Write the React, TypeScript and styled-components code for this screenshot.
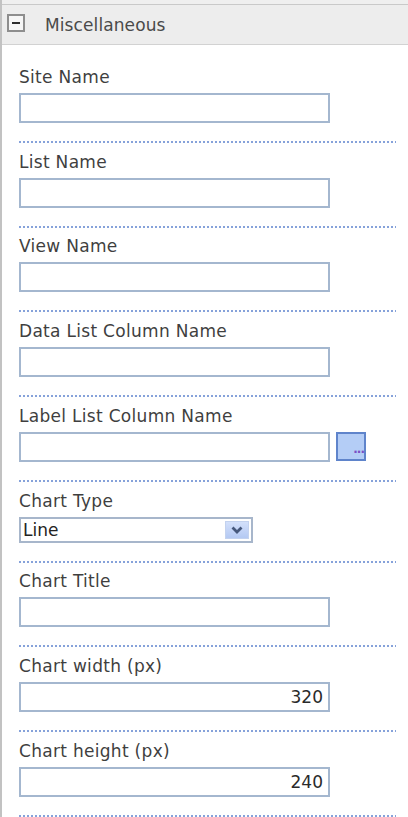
import React from "react";
import styled, { createGlobalStyle } from "styled-components";

const Global = createGlobalStyle`
  html, body { margin: 0; padding: 0; background: #ffffff; }
  body { font-family: "DejaVu Sans", Verdana, sans-serif; }
`;

const Panel = styled.div`
  width: 408px;
  min-height: 817px;
  box-sizing: border-box;
  border-left: 2px solid #c2c2c2;
  background: #ffffff;
`;

const TopCap = styled.div`
  height: 4px;
  background: #efefef;
`;

const Header = styled.div`
  height: 39px;
  background: #ededed;
  border-top: 1px solid #c9c9c9;
  border-bottom: 1px solid #d2d2d2;
  display: flex;
  align-items: center;
  padding-left: 5px;
  gap: 20px;
`;

const Toggle = styled.div`
  width: 18px;
  height: 18px;
  box-sizing: border-box;
  border: 2px solid #8e8e8e;
  background: #f6f6f6;
  display: flex;
  align-items: center;
  justify-content: center;
  margin-top: -3px;
  &::after {
    content: "";
    width: 8px;
    height: 2px;
    background: #2d2d2d;
  }
`;

const HeaderTitle = styled.span`
  font-size: 17px;
  color: #4a4a4a;
  line-height: 20px;
  letter-spacing: 0.1px;
`;

const Body = styled.div`
  padding: 13px 12px 0 17px;
`;

const Field = styled.div`
  padding-top: 8.75px;
  display: flex;
  flex-direction: column;
`;

const Label = styled.div`
  font-size: 17px;
  line-height: 20px;
  color: #3f3f3f;
  margin-bottom: 6px;
  white-space: nowrap;
  letter-spacing: 0.3px;
`;

const Row = styled.div`
  display: flex;
  align-items: center;
  gap: 6px;
`;

const TextBox = styled.div<{ $align?: "left" | "right" }>`
  width: 311px;
  height: 30px;
  box-sizing: border-box;
  border: 2px solid #a4b7cf;
  background: #ffffff;
  font-size: 17px;
  line-height: 26px;
  color: #2a2a2a;
  padding: 0 5px;
  text-align: ${(p) => p.$align ?? "left"};
`;

const PickerButton = styled.div`
  width: 30px;
  height: 29px;
  box-sizing: border-box;
  border: 2px solid #5f84cb;
  background: #b4cdf6;
  display: flex;
  align-items: flex-end;
  justify-content: flex-end;
  font-size: 12px;
  line-height: 12px;
  color: #7a4fc4;
  padding: 0 0 4px 0;
  letter-spacing: -1px;
  font-weight: bold;
`;

const SelectBox = styled.div`
  width: 234px;
  height: 26px;
  box-sizing: border-box;
  border: 2px solid #a7b6cb;
  background: #ffffff;
  display: flex;
  align-items: center;
  justify-content: space-between;
  padding: 0 2px 0 2px;
`;

const SelectText = styled.span`
  font-size: 17px;
  line-height: 20px;
  color: #232323;
`;

const SelectArrow = styled.div`
  width: 24px;
  height: 18px;
  box-sizing: border-box;
  background: linear-gradient(#d3e0fb, #b4c9f3);
  border: 1px solid #c3d2ef;
  display: flex;
  align-items: center;
  justify-content: center;
`;

const Separator = styled.div`
  margin-top: 18px;
  height: 2px;
  width: 377px;
  background-image: repeating-linear-gradient(
    to right,
    #86a2da 0,
    #86a2da 2px,
    transparent 2px,
    transparent 4px
  );
`;

type FieldDef =
  | { kind: "text"; label: string; value?: string; align?: "left" | "right" }
  | { kind: "picker"; label: string }
  | { kind: "select"; label: string; value: string };

const fields: FieldDef[] = [
  { kind: "text", label: "Site Name" },
  { kind: "text", label: "List Name" },
  { kind: "text", label: "View Name" },
  { kind: "text", label: "Data List Column Name" },
  { kind: "picker", label: "Label List Column Name" },
  { kind: "select", label: "Chart Type", value: "Line" },
  { kind: "text", label: "Chart Title" },
  { kind: "text", label: "Chart width (px)", value: "320", align: "right" },
  { kind: "text", label: "Chart height (px)", value: "240", align: "right" },
];

const Chevron = () => (
  <svg width="12" height="8" viewBox="0 0 12 8">
    <path d="M1.5 1.5 L6 6 L10.5 1.5" fill="none" stroke="#46587c" strokeWidth="2.8" />
  </svg>
);

export default function App() {
  return (
    <>
      <Global />
      <Panel>
        <TopCap />
        <Header>
          <Toggle />
          <HeaderTitle>Miscellaneous</HeaderTitle>
        </Header>
        <Body>
          {fields.map((f) => (
            <Field key={f.label}>
              <Label>{f.label}</Label>
              {f.kind === "text" && (
                <TextBox $align={f.align}>{f.value ?? ""}</TextBox>
              )}
              {f.kind === "picker" && (
                <Row>
                  <TextBox />
                  <PickerButton>...</PickerButton>
                </Row>
              )}
              {f.kind === "select" && (
                <SelectBox>
                  <SelectText>{f.value}</SelectText>
                  <SelectArrow>
                    <Chevron />
                  </SelectArrow>
                </SelectBox>
              )}
              <Separator />
            </Field>
          ))}
        </Body>
      </Panel>
    </>
  );
}
